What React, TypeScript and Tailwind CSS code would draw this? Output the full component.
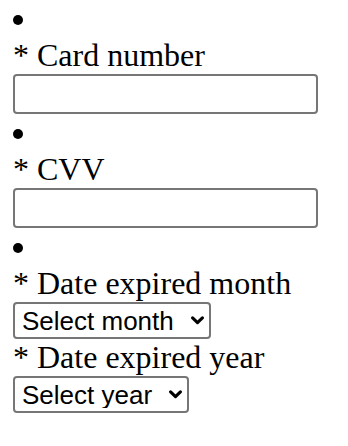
import { ChangeEvent, useState } from 'react';

// ==========================================================
// PAYMENT CARD FORM
// ==========================================================

const months = [
  '01', '02', '03', '04', '05', '06',
  '07', '08', '09', '10', '11', '12'
];

const years = ['2024', '2025', '2026', '2027', '2028', '2029', '2030'];

function Bullet() {

  return (
    <div className="h-[37px] pt-[15px]">
      <div className="w-[10px] h-[10px] rounded-full bg-black" />
    </div>
  );
}

function Label({ text }: { text: string }) {

  return (
    <label className="block h-[37px] leading-[37px] text-[32px] text-black whitespace-nowrap">
      * {text}
    </label>
  );
}

function TextField({
  value,
  onChange
}: {
  value: string;
  onChange: (e: ChangeEvent<HTMLInputElement>) => void;
}) {

  return (
    <input
      type="text"
      value={value}
      onChange={onChange}
      className="block w-[305px] h-[40px] border-2 border-[#767676] rounded-[4px] bg-white px-[4px] text-[26px] font-['Liberation_Sans',Arial,sans-serif] outline-none"
    />
  );
}

function Chevron() {

  return (
    <svg
      width="13"
      height="9"
      viewBox="0 0 13 9"
      className="absolute right-[7px] top-[14px] pointer-events-none"
    >
      <path
        d="M1.6 1.8 L6.5 6.6 L11.4 1.8"
        fill="none"
        stroke="black"
        strokeWidth="3.1"
        strokeLinecap="round"
        strokeLinejoin="round"
      />
    </svg>
  );
}

export default function App() {

  const [cardNumber, setCardNumber] = useState('');

  const [cvv, setCvv] = useState('');

  const [month, setMonth] = useState('');

  const [year, setYear] = useState('');

  return (

    <div className="min-h-screen bg-white pl-[13px] font-['Liberation_Serif','Times_New_Roman',serif]">

      <ul>

        {/* CARD NUMBER */}

        <li>
          <Bullet />
          <Label text="Card number" />
          <TextField
            value={cardNumber}
            onChange={(e) => setCardNumber(e.target.value)}
          />
        </li>

        {/* CVV */}

        <li>
          <Bullet />
          <Label text="CVV" />
          <TextField
            value={cvv}
            onChange={(e) => setCvv(e.target.value)}
          />
        </li>

        {/* EXPIRY */}

        <li>
          <Bullet />
          <Label text="Date expired month" />

          <div className="relative w-[198px] h-[37px]">
            <select
              value={month}
              onChange={(e) => setMonth(e.target.value)}
              className="appearance-none w-full h-full border-2 border-[#767676] rounded-[4px] bg-white pl-[7px] pr-[24px] text-[26px] leading-none text-black font-['Liberation_Sans',Arial,sans-serif] outline-none"
            >
              <option value="">Select month</option>
              {months.map((m) => (
                <option key={m} value={m}>{m}</option>
              ))}
            </select>
            <Chevron />
          </div>

          <Label text="Date expired year" />

          <div className="relative w-[176px] h-[37px]">
            <select
              value={year}
              onChange={(e) => setYear(e.target.value)}
              className="appearance-none w-full h-full border-2 border-[#767676] rounded-[4px] bg-white pl-[7px] pr-[24px] text-[26px] leading-none text-black font-['Liberation_Sans',Arial,sans-serif] outline-none"
            >
              <option value="">Select year</option>
              {years.map((y) => (
                <option key={y} value={y}>{y}</option>
              ))}
            </select>
            <Chevron />
          </div>
        </li>

      </ul>

    </div>
  );
}
